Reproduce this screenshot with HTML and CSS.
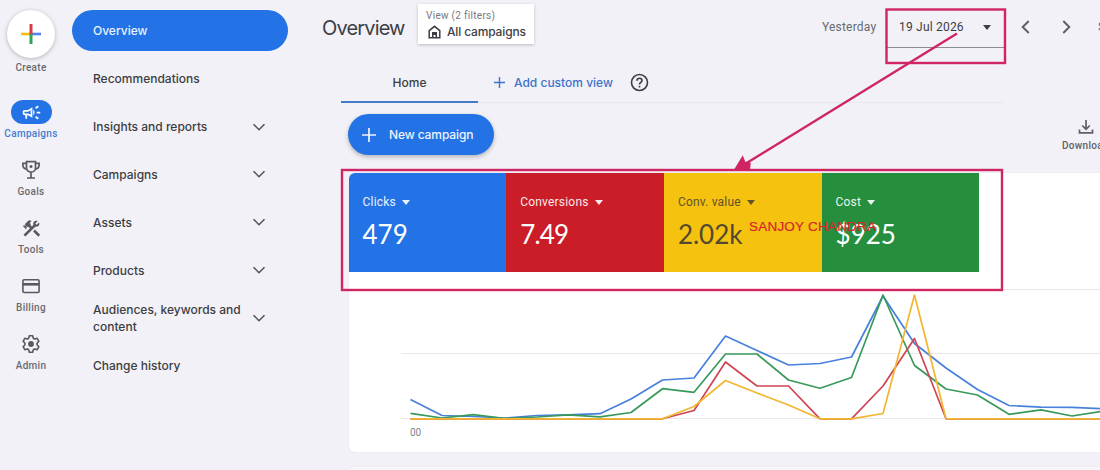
FILE: index.html
```html
<!DOCTYPE html>
<html lang="en">
  <head>
    <meta charset="utf-8">
    <title>Overview</title>
    <link rel="stylesheet" href="styles.css">
  </head>

  <body>
    <nav class="rail">
      <a class="rail-item create">
        <span class="create-btn">
          <svg width="22" height="22" viewBox="0 0 22 22">
            <path d="M1 11h10" stroke="#f9bc15" stroke-width="2.6"/>
            <path d="M11 11h10" stroke="#4f83ee" stroke-width="2.6"/>
            <path d="M11 1v11" stroke="#dc3b45" stroke-width="3"/>
            <path d="M11 11v10" stroke="#2fa356" stroke-width="3"/>
          </svg>
        </span>
        <span>Create</span>
      </a>
      <a class="rail-item active">
        <span class="rail-icon">
          <svg width="21" height="21" viewBox="0 0 24 24">
            <path d="M18 11v2h4v-2h-4zm-2 6.600c1 .7 2.200 1.600 3.200 2.400l1.200-1.600c-1-.8-2.200-1.700-3.200-2.400l-1.200 1.600zM20.400 5.600L19.200 4c-1 .8-2.200 1.700-3.200 2.400l1.200 1.600c1-.7 2.200-1.600 3.200-2.400zM4 9c-1.100 0-2 .9-2 2v2c0 1.100.9 2 2 2h1v4h2v-4h1l5 3V6L8 9H4zm5 1.700l2-1.200v5l-2-1.200-.5-.3H4v-2h4.500l.5-.3zM15.500 12c0-1.300-.6-2.500-1.500-3.300v6.700c.9-.9 1.500-2.100 1.500-3.400z"/>
          </svg>
        </span>
        <span>Campaigns</span>
      </a>
      <a class="rail-item">
        <span class="rail-icon">
          <svg width="22" height="22" viewBox="0 0 22 22" fill="none" stroke="currentColor" stroke-width="1.700">
            <path d="M6.500 2.700h9v6.200c0 2.500-2 4.300-4.500 4.300s-4.500-1.800-4.500-4.300zM6.500 4.300H2.900v1.700c0 2.300 1.500 3.900 4 4.100M15.500 4.300h3.600v1.700c0 2.300-1.500 3.900-4 4.100M11 13v5.800M7 19h8"/>
            <circle cx="11" cy="7.500" r="1.500" fill="currentColor" stroke="none"/>
          </svg>
        </span>
        <span>Goals</span>
      </a>
      <a class="rail-item">
        <span class="rail-icon">
          <svg width="21" height="21" viewBox="0 0 24 24">
            <path d="M13.780 15.300l6 6 2.110-2.160-6-6zm3.720-5.200c-.39 0-.81-.05-1.140-.19L4.970 21.250l-2.110-2.110 7.410-7.400L8.500 9.960l-.72.700-1.450-1.410v2.860l-.7.700-3.520-3.560.7-.7h2.810l-1.400-1.410 3.560-3.560a2.976 2.976 0 0 1 4.220 0L9.890 5.740l1.410 1.400-.71.710 1.790 1.780 1.820-1.880c-.14-.33-.2-.75-.2-1.120a3.490 3.490 0 0 1 3.500-3.520c.59 0 1.110.14 1.580.42L16.410 6.200l1.500 1.500 2.670-2.670c.28.470.42.970.42 1.600 0 1.920-1.550 3.470-3.500 3.470z"/>
          </svg>
        </span>
        <span>Tools</span>
      </a>
      <a class="rail-item">
        <span class="rail-icon">
          <svg width="22" height="22" viewBox="0 0 22 22" fill="none" stroke="currentColor">
            <rect x="2.900" y="4.700" width="16.200" height="12.800" rx="1.200" stroke-width="1.600"/>
            <path d="M3 9.300h16" stroke-width="2.600"/>
          </svg>
        </span>
        <span>Billing</span>
      </a>
      <a class="rail-item">
        <span class="rail-icon">
          <svg width="22" height="22" viewBox="0 0 22 22" fill="none" stroke="currentColor" stroke-width="1.600">
            <path d="M9.300 2.800h3.400l.6 2.400 1.500.9 2.400-.8 1.700 3-1.800 1.800v1.800l1.800 1.800-1.700 3-2.400-.8-1.500.9-.6 2.400H9.300l-.6-2.400-1.500-.9-2.400.8-1.700-3 1.800-1.800v-1.800L3.100 8.300l1.700-3 2.400.8 1.500-.9z" stroke-linejoin="round"/>
            <circle cx="11" cy="11" r="2.900" fill="currentColor" stroke="none"/>
          </svg>
        </span>
        <span>Admin</span>
      </a>
    </nav>

    <nav class="sidenav">
      <a class="nav-item selected">Overview</a>
      <a class="nav-item">Recommendations</a>
      <a class="nav-item">Insights and reports <svg class="chevron" viewBox="0 0 14 8"><path d="M1.500 1.200L7 6.700l5.500-5.500"/></svg></a>
      <a class="nav-item">Campaigns <svg class="chevron" viewBox="0 0 14 8"><path d="M1.500 1.200L7 6.700l5.500-5.500"/></svg></a>
      <a class="nav-item">Assets <svg class="chevron" viewBox="0 0 14 8"><path d="M1.500 1.200L7 6.700l5.500-5.500"/></svg></a>
      <a class="nav-item">Products <svg class="chevron" viewBox="0 0 14 8"><path d="M1.500 1.200L7 6.700l5.500-5.500"/></svg></a>
      <a class="nav-item">Audiences, keywords and<br>content <svg class="chevron" viewBox="0 0 14 8"><path d="M1.500 1.200L7 6.700l5.500-5.500"/></svg></a>
      <a class="nav-item">Change history</a>
    </nav>

    <main class="main">
      <header class="header">
        <h1>Overview</h1>
        <div class="view-box">
          <span class="view-label">View (2 filters)</span>
          <span class="view-name">
            <svg width="13" height="14" viewBox="0 0 13 14">
              <path d="M1.200 5.600L6.500 1.300l5.300 4.300v7.200H1.200z" fill="none" stroke="currentColor" stroke-width="1.500"/>
              <path d="M4 7h5v5.500H7.500V10h-2v2.500H4z" fill="currentColor"/>
            </svg>
            All campaigns
          </span>
        </div>
        <div class="dates">
          <span class="yesterday">Yesterday</span>
          <div class="date-select"><span>19 Jul 2026</span><i class="caret"></i></div>
          <svg class="arrow" viewBox="0 0 9 14"><path d="M7.700 1L1.700 7l6 6"/></svg>
          <svg class="arrow" viewBox="0 0 9 14"><path d="M1.300 1l6 6-6 6"/></svg>
          <a class="show">S</a>
        </div>
      </header>

      <div class="tabs">
        <a class="tab">Home</a>
        <a class="add-view">
          <svg width="11" height="11" viewBox="0 0 11 11"><path d="M5.500 0v11M0 5.500h11" stroke="currentColor" stroke-width="1.400"/></svg>
          <span>Add custom view</span>
        </a>
        <svg class="help" width="19" height="19" viewBox="0 0 19 19" fill="none" stroke="currentColor" stroke-width="1.600">
          <circle cx="9.500" cy="9.500" r="8"/>
          <path d="M7 7.700c0-1.500 1.100-2.500 2.500-2.500s2.500 1 2.500 2.300c0 1.800-2.500 2-2.500 4M9.500 12.800v1.600"/>
        </svg>
      </div>

      <div class="toolbar">
        <button class="new-campaign">
          <svg width="14" height="14" viewBox="0 0 14 14"><path d="M7 0v14M0 7h14" stroke="currentColor" stroke-width="1.700"/></svg>
          <span>New campaign</span>
        </button>
        <a class="download">
          <svg width="16" height="16" viewBox="0 0 16 16" fill="none" stroke="currentColor" stroke-width="1.700">
            <path d="M8 1v9M4.200 6.500L8 10.300l3.800-3.800M1.500 10.500v3.300h13v-3.300"/>
          </svg>
          <span>Download</span>
        </a>
      </div>

      <section class="card">
        <div class="metrics">
          <div class="metric clicks">
            <span class="metric-name">Clicks <i class="caret"></i></span>
            <span class="metric-value">479</span>
          </div>
          <div class="metric conversions">
            <span class="metric-name">Conversions <i class="caret"></i></span>
            <span class="metric-value">7.49</span>
          </div>
          <div class="metric value">
            <span class="metric-name">Conv. value <i class="caret"></i></span>
            <span class="metric-value">2.02k</span>
          </div>
          <div class="metric cost">
            <span class="metric-name">Cost <i class="caret"></i></span>
            <span class="metric-value">$925</span>
          </div>
        </div>
        <svg class="chart" viewBox="349 272 751 180">
          <path class="grid" d="M1003 289.500h97M401 353.500h699M401 418.500h699"/>
          <polyline stroke="#4880dc" points="410.500,399.500 442,415.500 473.500,416.500 505,418 537,415.500 568,414.800 600,413.700 631,399 662.500,380 694,378 725.500,336 757,350.500 788.500,365 820,363.500 851.500,357 883,296 914.500,343.500 946,368 977.500,389.500 1009,405.500 1041,407.200 1072,407.400 1104,408.700"/>
          <polyline stroke="#39995a" points="410.500,413.300 442,418 473.500,414.700 505,418.500 537,417 568,414.800 600,416.800 631,412.500 662.500,388.700 694,392.300 725.500,354 757,354 788.500,380 820,388.300 851.500,377.500 883,295 914.500,365.500 946,389 977.500,395 1009,414.300 1041,409.800 1072,416 1104,411"/>
          <polyline stroke="#cf4454" points="410.500,418.800 662.500,418.800 694,410.500 725.500,362 757,386 788.500,386 820,418.800 851.500,418.800 883,386 914.500,338.500 946,418.800 1104,418.800"/>
          <polyline stroke="#f2b630" points="410.500,418.800 662.500,418.800 694,406.500 725.500,380.500 757,393 788.500,405 820,418.800 851.500,418.800 883,413.500 914.500,295 946,418.800 1104,418.800"/>
          <text x="410" y="436">00</text>
        </svg>
      </section>
      <section class="card next-card"></section>
    </main>

    <!-- annotations drawn over the page -->
    <svg class="notes" viewBox="0 0 1100 470">
      <rect x="886.500" y="9.500" width="118.500" height="53.500"/>
      <rect x="342" y="170" width="660" height="120"/>
      <path d="M957 33.500L745 164"/>
      <path class="head" d="M735.500 169.500l7-11.500 1.800 4.700 5.200 1-.5 4.300z"/>
      <text x="749" y="231" textLength="127">SANJOY CHANDRA</text>
    </svg>
  </body>
</html>
```

FILE: styles.css
```css
* {
  box-sizing: border-box;
}

body {
  position: relative;
  display: flex;
  width: 1100px;
  height: 470px;
  margin: 0;
  overflow: hidden;
  background-color: #f2f1f7;
  color: #3c3e43;
  font: 500 12px/17px Inter, "Open Sans", sans-serif;
}

h1 {
  margin: 0;
  font-size: 20px;
  line-height: 28px;
  font-weight: 400;
  letter-spacing: -0.85px;
}

/* left rail */
.rail {
  width: 62px;
  flex: none;
  padding-top: 10px;
  color: #696a70;
  font: 500 10px/12px Roboto, sans-serif;
  letter-spacing: 0.3px;
}

.rail-item {
  display: flex;
  flex-direction: column;
  align-items: center;
  gap: 4px;
  height: 58px;
  color: #696a70;
}

.rail-item.create {
  height: 90px;
}

.create-btn {
  display: flex;
  align-items: center;
  justify-content: center;
  width: 48px;
  height: 48px;
  border-radius: 50%;
  background-color: #fff;
  box-shadow: 0 1px 4px rgba(60, 64, 67, 0.35);
}

.rail-icon {
  display: flex;
  align-items: center;
  justify-content: center;
  width: 41px;
  height: 24px;
  border-radius: 12px;
  color: #595a60;
  fill: currentColor;
}

.rail-item.active {
  color: #447bd0;
}

.active .rail-icon {
  background-color: #2373e6;
  color: #fff;
}

/* section navigation */
.sidenav {
  width: 248px;
  flex: none;
  padding: 7px 22px 0 10px;
}

.nav-item {
  display: flex;
  align-items: center;
  justify-content: space-between;
  height: 47.800px;
  padding: 0 22px 0 21px;
}

.nav-item.selected {
  height: 41px;
  margin: 3px 0 4px;
  border-radius: 21px;
  background-color: #2373e6;
  color: #eaf2ff;
}

.chevron {
  width: 14px;
  height: 8px;
  fill: none;
  stroke: #55565c;
  stroke-width: 1.600;
}

/* page header */
.main {
  width: 790px;
  flex: none;
}

.header {
  display: flex;
  height: 62px;
  padding-left: 12px;
}

.header h1 {
  flex: none;
  width: 96px;
  padding-top: 14px;
}

.view-box {
  display: flex;
  flex: none;
  flex-direction: column;
  width: 116px;
  height: 40px;
  margin-top: 4px;
  padding: 4px 0 0 8px;
  background-color: #fff;
  box-shadow: 0 1px 3px rgba(60, 64, 67, 0.3);
  white-space: nowrap;
}

.view-label {
  color: #77787e;
  font: 400 10px/15px Roboto, sans-serif;
  letter-spacing: 0.3px;
}

.view-name {
  display: flex;
  align-items: center;
  gap: 6px;
  padding-left: 2px;
  letter-spacing: -0.15px;
}

.dates {
  display: flex;
  flex: none;
  align-items: flex-start;
  width: 278px;
  margin-left: 288px;
  overflow: hidden;
  font: 400 12px/17px Roboto, sans-serif;
  letter-spacing: 0.2px;
  white-space: nowrap;
}

.yesterday {
  flex: none;
  width: 64px;
  padding-top: 19px;
  color: #696a70;
}

.date-select {
  display: flex;
  flex: none;
  align-items: center;
  justify-content: space-between;
  width: 119px;
  height: 40px;
  margin-top: 8px;
  padding: 0 14px 0 13px;
  border-bottom: 1px solid #8c8d92;
}

.caret {
  display: inline-block;
  border: 4.500px solid transparent;
  border-top: 5px solid currentColor;
  border-bottom: 0;
}

.arrow {
  flex: none;
  width: 9px;
  height: 14px;
  margin: 20px 0 0 16px;
  fill: none;
  stroke: #5d5e64;
  stroke-width: 1.900;
}

.arrow + .arrow {
  margin-left: 32px;
}

.show {
  padding: 19px 0 0 27px;
  color: #2373e6;
}

/* tabs */
.tabs {
  display: flex;
  align-items: center;
  width: 663px;
  height: 41px;
  margin-left: 31px;
  border-bottom: 1px solid #e7e7ed;
}

.tab {
  width: 137px;
  height: 41px;
  border-bottom: 2px solid #4779c9;
  line-height: 41px;
  text-align: center;
}

.add-view {
  display: flex;
  align-items: center;
  gap: 9px;
  width: 134px;
  margin-left: 16px;
  color: #3c73cb;
  white-space: nowrap;
}

.help {
  margin-left: 2px;
}

/* toolbar */
.toolbar {
  display: flex;
  justify-content: space-between;
  height: 70px;
  padding: 11px 0 0 38px;
}

.new-campaign {
  display: flex;
  align-items: center;
  gap: 13px;
  width: 146px;
  height: 41px;
  padding: 0 0 0 14px;
  border: 0;
  border-radius: 21px;
  background-color: #2373e6;
  box-shadow: 0 2px 4px rgba(60, 64, 67, 0.35);
  color: #eef4ff;
  font: inherit;
  letter-spacing: -0.1px;
}

.download {
  display: flex;
  flex-direction: column;
  align-items: center;
  gap: 4px;
  width: 38px;
  padding-top: 5px;
  overflow: hidden;
  color: #5f6066;
  font: 500 10px/14px Roboto, sans-serif;
  letter-spacing: 0.3px;
}

.download svg {
  margin-left: 10px;
}

.download span {
  align-self: flex-start;
}

/* scorecards and chart */
.card {
  height: 279px;
  margin-left: 38.500px;
  border-radius: 6px 0 0 6px;
  background-color: #fff;
  box-shadow: 0 0 1px rgba(60, 64, 67, 0.2);
  overflow: hidden;
}

.next-card {
  height: 3px;
  margin-top: 15px;
  border-radius: 3px 0 0 0;
  background-color: #f7f6fa;
}

.metrics {
  display: grid;
  grid-template-columns: repeat(4, 157.700px);
  height: 99px;
}

.metric {
  display: flex;
  flex-direction: column;
  padding: 21px 0 0 14px;
  color: #fff;
}

.metric-name {
  display: flex;
  align-items: center;
  gap: 6px;
  opacity: 0.9;
  font: 400 12px/16px Roboto, sans-serif;
  letter-spacing: 0.2px;
}

.metric-value {
  font: 400 26px/32px Lato, sans-serif;
  padding-top: 8px;
}

.clicks {
  background-color: #2373e6;
}

.conversions {
  background-color: #ca1d28;
}

.conversions .metric-value {
  letter-spacing: -0.8px;
}

.value {
  background-color: #f4c20f;
  color: #52482f;
}

.cost {
  background-color: #258f3d;
}

.chart {
  display: block;
  width: 751px;
  height: 180px;
}

.chart polyline {
  fill: none;
  stroke-width: 1.700;
  stroke-linejoin: round;
}

.grid {
  stroke: #e9e8ed;
}

.chart text {
  fill: #85868b;
  font: 400 10px Roboto, sans-serif;
}

.notes {
  position: absolute;
  top: 0;
  left: 0;
  width: 1100px;
  height: 470px;
  fill: none;
  stroke: #cf2562;
  stroke-width: 2.400;
}

.notes .head {
  fill: #cf2562;
}

.notes text {
  fill: #d9252f;
  stroke: #d9252f;
  stroke-width: 0.200;
  font: 400 13.500px "Liberation Sans", sans-serif;
}
```
